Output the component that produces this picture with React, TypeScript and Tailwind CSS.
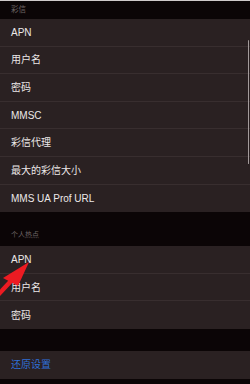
import React from 'react';

const mmsRows = ['APN', '用户名', '密码', 'MMSC', '彩信代理', '最大的彩信大小', 'MMS UA Prof URL'];
const hotspotRows = ['APN', '用户名', '密码'];

const Row: React.FC<{ label: string; last?: boolean; blue?: boolean }> = ({ label, last, blue }) => (
  <div
    className={`h-[27.6px] flex items-center pl-[11px] bg-[#2a2122] text-[10px] ${blue ? 'text-[#2f6fd6]' : 'text-[#ece8e8]'} ${last ? '' : 'border-b border-[#382e2f]'}`}
  >
    {label}
  </div>
);

const App: React.FC = () => {
  return (
    <div
      className="relative w-[250px] h-[384px] overflow-hidden bg-[#0b0506] flex flex-col"
      style={{ fontFamily: '"Liberation Sans", "Noto Sans CJK SC", sans-serif' }}
    >
      <div className="h-px bg-[#cfcaca]" />
      <div className="h-[18px] flex items-center pl-[11px] text-[7.5px] text-[#6e6465]">彩信</div>
      <div className="flex flex-col">
        {mmsRows.map((r, i) => (
          <Row key={r} label={r} last={i === mmsRows.length - 1} />
        ))}
      </div>
      <div className="h-[34px] flex items-end pb-[6px] pl-[11px] text-[7px] text-[#6e6465]">个人热点</div>
      <div className="flex flex-col">
        {hotspotRows.map((r, i) => (
          <Row key={r} label={r} last={i === hotspotRows.length - 1} />
        ))}
      </div>
      <div className="h-[22px]" />
      <Row label="还原设置" last blue />

      {/* scroll indicator */}
      <div className="absolute right-[1px] top-[40px] w-[1.5px] h-[124px] bg-[#a39b9b] rounded-full" />

      {/* red arrow annotation */}
      <svg className="absolute left-0 top-0" width="250" height="384" viewBox="0 0 250 384">
        <polygon points="29,262 3,278 18,286" fill="#ec1b22" />
        <line x1="11" y1="281" x2="-3" y2="296" stroke="#ec1b22" strokeWidth="4.5" />
      </svg>
    </div>
  );
};

export default App;
